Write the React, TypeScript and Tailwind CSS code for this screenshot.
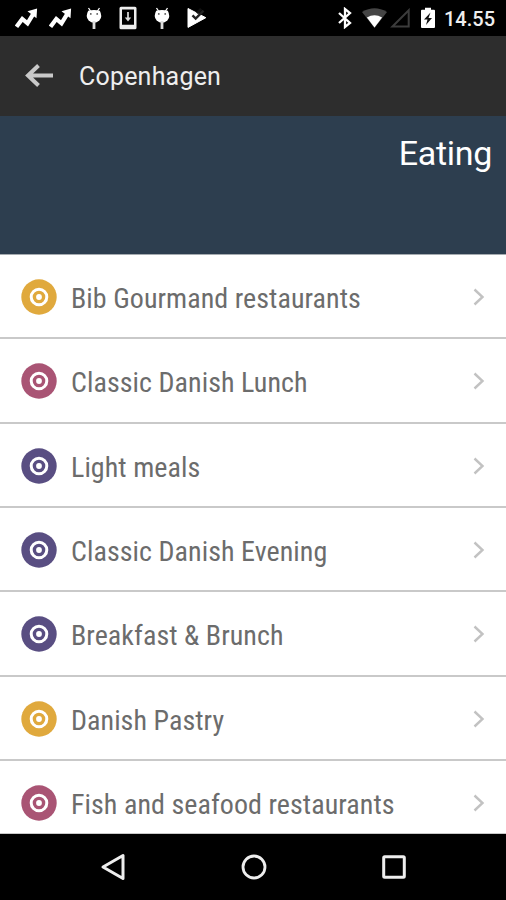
const rows = [
  { name: "Bib Gourmand restaurants", color: "text-[#e0a93d]" },
  { name: "Classic Danish Lunch", color: "text-[#a95474]" },
  { name: "Light meals", color: "text-[#594e82]" },
  { name: "Classic Danish Evening", color: "text-[#594e82]" },
  { name: "Breakfast & Brunch", color: "text-[#594e82]" },
  { name: "Danish Pastry", color: "text-[#e0a93d]" },
  { name: "Fish and seafood restaurants", color: "text-[#a95474]" },
];

function Trend() {
  return (
    <svg className="h-[22px] w-[23px] shrink-0" viewBox="0 0 23 22" fill="none">
      <path d="M1.500 19.800 7.300 12l5.200 4.300L18.300 6.800" stroke="#fff" strokeWidth="4.200" />
      <path d="m12.500 4.300 9.600-2.800-.6 9.800Z" fill="#fff" />
    </svg>
  );
}

function Bug() {
  return (
    <svg className="h-[24px] w-[16px] shrink-0" viewBox="0 0 16 24" fill="none">
      <path d="m2.500 2 2 3M13.500 2l-2 3" stroke="#fff" strokeWidth="1.300" />
      <path d="M2.200 4.800Q8 3.200 13.800 4.800Q17 11 13.300 14.600Q8 19 2.700 14.600Q-1 11 2.200 4.800Z" fill="#fff" />
      <path d="M8 15v8" stroke="#ddd" strokeWidth="2.800" />
      <circle cx="4.800" cy="7.900" r=".9" fill="#555" />
      <circle cx="11.200" cy="7.900" r=".9" fill="#555" />
    </svg>
  );
}

function StatusBar() {
  return (
    <div className="flex h-[36px] shrink-0 items-center bg-black pl-[15px] pr-[11px]">
      <Trend />
      <div className="w-[11px]" />
      <Trend />
      <div className="w-[14px]" />
      <Bug />
      <svg className="ml-[17px] h-[24px] w-[18px]" viewBox="0 0 18 24" fill="none">
        <path fillRule="evenodd" d="M2 .7h14a1.500 1.500 0 0 1 1.500 1.500v19.600a1.500 1.500 0 0 1-1.500 1.500H2A1.500 1.500 0 0 1 .5 21.800V2.200A1.500 1.500 0 0 1 2 .7Zm1 2.700v15.300h12V3.400Z" fill="#eee" />
        <path d="M9 6v8" stroke="#ddd" strokeWidth="1.700" />
        <path d="M5.800 11.500h6.400L9 15.500Z" fill="#ddd" />
      </svg>
      <div className="w-[17px]" />
      <Bug />
      <svg className="ml-[17px] h-[20px] w-[20px]" viewBox="0 0 20 20">
        <path d="M1 .5 18.800 9.700 1 19.400Z" fill="#fff" stroke="#fff" strokeLinejoin="round" />
        <path d="m5.500 7.300 3.200 3.300 7.800-8" fill="none" stroke="#222" strokeWidth="2.400" />
        <path d="m10 5.200 4.200-4.200" fill="none" stroke="#111" strokeWidth="3" />
      </svg>
      <svg className="ml-auto h-[22px] w-[14px] translate-x-px" viewBox="0 0 14 22" fill="none" stroke="#fff" strokeWidth="2.300">
        <path d="m1 6 11 10-5 4V2l5 4L1 16" />
      </svg>
      <svg className="ml-[10px] h-[20px] w-[25px] translate-x-px" viewBox="0 0 25 20">
        <path d="M0 4Q12.500-3.500 25 4L12.500 20Z" fill="#454545" />
        <path d="M4.900 9.500Q12.500 5 20.100 9.500L12.500 19.500Z" fill="#fff" />
      </svg>
      <svg className="ml-[3px] h-[20px] w-[20px] translate-x-px" viewBox="0 0 20 20">
        <path d="M2.500 18.500 18.700 2.300v16.200Z" fill="none" stroke="#3c3c3c" strokeWidth="2" />
      </svg>
      <svg className="ml-[10px] h-[22px] w-[16px] translate-x-px" viewBox="0 0 16 22">
        <path d="M5 .8h6v2h3a1 1 0 0 1 1 1V20a1 1 0 0 1-1 1H2a1 1 0 0 1-1-1V3.800a1 1 0 0 1 1-1h3Z" fill="#fff" />
        <path d="M10.500 5.500 4 12.500h3.500L6 18l6-7H8.500Z" fill="#111" />
      </svg>
      <svg className="ml-[9px] h-[24px] w-[51px] overflow-visible">
        <text x="0" y="20" textLength="51" lengthAdjust="spacingAndGlyphs" className="fill-[#eee] text-[20px] font-medium">14.55</text>
      </svg>
    </div>
  );
}

export default function App() {
  return (
    <div className="flex h-[900px] w-[506px] flex-col overflow-hidden bg-white font-['Roboto',sans-serif]">
      <StatusBar />
      <header className="flex h-[80px] shrink-0 items-center bg-[#2d2d2d] pl-[25px]">
        <svg className="h-[24px] w-[29px]" viewBox="0 0 29 24" fill="none" stroke="#c9c9c9" strokeWidth="4">
          <path d="M28 11.500H3M13.500 1.500 3 11.500l10.500 10" />
        </svg>
        <h1 className="ml-[25px] pt-[2px] text-[25px] leading-[30px] tracking-[0.2px] text-[#eee]">Copenhagen</h1>
      </header>
      <section className="flex h-[138px] shrink-0 justify-end bg-[#2d3e4f] pr-[14px] pt-[16px]">
        <h2 className="text-[34px] leading-[42px] tracking-[-0.3px] text-white">Eating</h2>
      </section>
      <main className="flex h-[580px] shrink-0 flex-col overflow-hidden border-y border-t-[#a5abb0] border-b-[#c9c9c9]">
        {rows.map((row) => (
          <div key={row.name} className="flex h-[84.350px] shrink-0 items-center border-b-2 border-[#c9c9c9] pl-[21px] pr-[21px] pt-[1.500px]">
            <svg className={`size-[36px] ${row.color}`} viewBox="0 0 36 36">
              <circle cx="18" cy="18" r="17.700" fill="currentColor" />
              <circle cx="18" cy="18" r="7.800" fill="none" stroke="#fff" strokeWidth="3" />
              <circle cx="18" cy="18" r="2.900" fill="#fff" />
            </svg>
            <span className="ml-[14px] whitespace-nowrap pt-[4px] font-['Roboto_Condensed','Roboto',sans-serif] text-[28px] leading-[34px] tracking-[0.060px] text-[#6c6c6c] [font-stretch:75%]">{row.name}</span>
            <svg className="ml-auto h-[18px] w-[12px]" viewBox="0 0 12 18" fill="none" stroke="#c2c2c2" strokeWidth="2.400">
              <path d="m1.500 1.500 8 7.500-8 7.500" />
            </svg>
          </div>
        ))}
      </main>
      <nav className="flex h-[66px] shrink-0 items-center bg-black pl-[100px]">
        <svg className="h-[28px] w-[26px]" viewBox="0 0 26 28" fill="none" stroke="#eee" strokeWidth="3" strokeLinejoin="round">
          <path d="M23 2.500v23L3 14Z" />
        </svg>
        <svg className="ml-[113.500px] size-[28px]" viewBox="0 0 28 28">
          <circle cx="14" cy="14" r="11" fill="none" stroke="#eee" strokeWidth="2.800" />
        </svg>
        <svg className="ml-[112.500px] size-[28px]" viewBox="0 0 28 28">
          <rect x="3.700" y="3.700" width="20.600" height="20.600" rx="1" fill="none" stroke="#eee" strokeWidth="3" />
        </svg>
      </nav>
    </div>
  );
}
